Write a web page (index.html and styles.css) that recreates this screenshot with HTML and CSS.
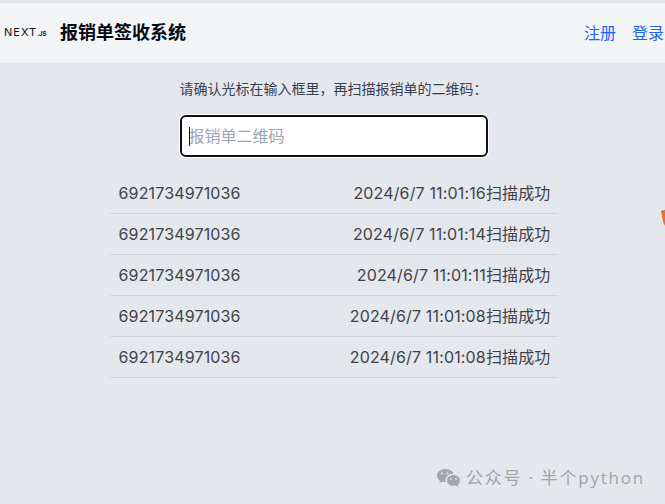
FILE: index.html
```html
<!DOCTYPE html>
<html lang="zh">
<head>
<meta charset="utf-8">
<title>报销单签收系统</title>
<link rel="stylesheet" href="styles.css">
</head>
<body>
<header class="header">
  <div class="brand">
    <span class="logo">NEXT<span class="logo-js">.JS</span></span>
    <span class="title">报销单签收系统</span>
  </div>
  <nav class="nav">
    <a class="nav-link">注册</a>
    <a class="nav-link">登录</a>
  </nav>
</header>
<main class="main">
  <p class="hint">请确认光标在输入框里，再扫描报销单的二维码：</p>
  <div class="field"><span class="caret"></span><span class="placeholder">报销单二维码</span></div>
  <ul class="list">
    <li class="row"><span>6921734971036</span><span>2024/6/7 11:01:16扫描成功</span></li>
    <li class="row"><span>6921734971036</span><span>2024/6/7 11:01:14扫描成功</span></li>
    <li class="row"><span>6921734971036</span><span>2024/6/7 11:01:11扫描成功</span></li>
    <li class="row"><span>6921734971036</span><span>2024/6/7 11:01:08扫描成功</span></li>
    <li class="row"><span>6921734971036</span><span>2024/6/7 11:01:08扫描成功</span></li>
  </ul>
</main>
<div class="orange"></div>
<div class="watermark">
  <svg class="wechat" width="25" height="20" viewBox="0 0 25 20">
    <path d="M9 1C4.600 1 1 4 1 7.600c0 2.100 1.200 3.900 3 5.100l-.8 2.500 3-1.500c.9.200 1.800.4 2.800.4.300 0 .6 0 .9 0-.2-.7-.3-1.300-.3-2 0-3.600 3.300-6.400 7.400-6.400.2 0 .4 0 .6 0C16.800 3.100 13.200 1 9 1z" fill="#a3a6aa"/>
    <path d="M24 12.400c0-3-3-5.400-6.500-5.400S11 9.400 11 12.400s3 5.400 6.500 5.400c.8 0 1.500-.1 2.200-.3l2.400 1.300-.6-2.100c1.500-1.100 2.500-2.700 2.500-4.300z" fill="#a3a6aa"/>
    <circle cx="6" cy="5.500" r="1.100" fill="#e2e5ea"/>
    <circle cx="11.500" cy="5.500" r="1.100" fill="#e2e5ea"/>
    <circle cx="15" cy="11" r=".9" fill="#e2e5ea"/>
    <circle cx="20" cy="11" r=".9" fill="#e2e5ea"/>
  </svg>
  <span class="wm-text">公众号 · 半个python</span>
</div>
</body>
</html>
```
FILE: styles.css
```css
* { box-sizing: border-box; }
html, body { margin: 0; height: 100%; }
body {
  position: relative;
  overflow: hidden;
  background: #e4e7ec;
  font-family: Inter, "Noto Sans CJK SC", sans-serif;
  color: #374151;
  padding-top: 2px;
}
.header {
  height: 61px;
  border-top: 1px solid #dcdee1;
  background: #f3f4f6;
  display: flex;
  align-items: center;
  justify-content: space-between;
}
.brand { display: flex; align-items: center; padding-left: 4px; }
.logo {
  width: 56px;
  font-size: 11px;
  letter-spacing: 1px;
  color: #111;
  font-weight: 400;
  line-height: 12px;
}
.logo-js { font-size: 6px; font-weight: 700; letter-spacing: 0; }
.title { font-size: 18px; font-weight: 600; color: #030712; line-height: 28px; }
.nav { display: flex; gap: 16px; margin-right: 1px; }
.nav-link { font-size: 16px; line-height: 24px; color: #1d64f0; }
.main { display: flex; flex-direction: column; align-items: center; padding-left: 2px; }
.hint { margin: 16px 0 0; font-size: 14px; line-height: 20px; color: #374151; }
.field {
  margin-top: 16px;
  width: 308px;
  height: 42px;
  background: #fff;
  border: 2px solid #111;
  border-radius: 6px;
  box-shadow: 0 0 0 1px #fff;
  display: flex;
  align-items: center;
  padding-left: 7px;
  position: relative;
}
.caret { position: absolute; left: 7px; top: 10px; width: 1px; height: 19px; background: #111; }
.placeholder { font-size: 16px; line-height: 24px; color: #9ca3af; }
.list { list-style: none; margin: 16px 0 0; padding: 0; width: 448px; }
.row {
  height: 41px;
  display: flex;
  align-items: center;
  justify-content: space-between;
  padding: 0 7px 0 9px;
  border-bottom: 1px solid #d1d5db;
  font-size: 16px;
  line-height: 24px;
  letter-spacing: .15px;
  color: #3f4349;
}
.orange {
  position: absolute;
  left: 661px;
  top: 209px;
  width: 6px;
  height: 20px;
  background: #f76b2b;
  clip-path: polygon(0 10%, 100% 0, 100% 100%, 40% 70%);
}
.watermark {
  position: absolute;
  left: 436px;
  top: 467px;
  display: flex;
  align-items: center;
  gap: 5px;
  color: #a1a4a9;
}
.wechat { display: block; }
.wm-text { font-size: 17px; line-height: 22px; letter-spacing: 1.750px; font-family: "Open Sans", "Noto Sans CJK SC", sans-serif; }
```
